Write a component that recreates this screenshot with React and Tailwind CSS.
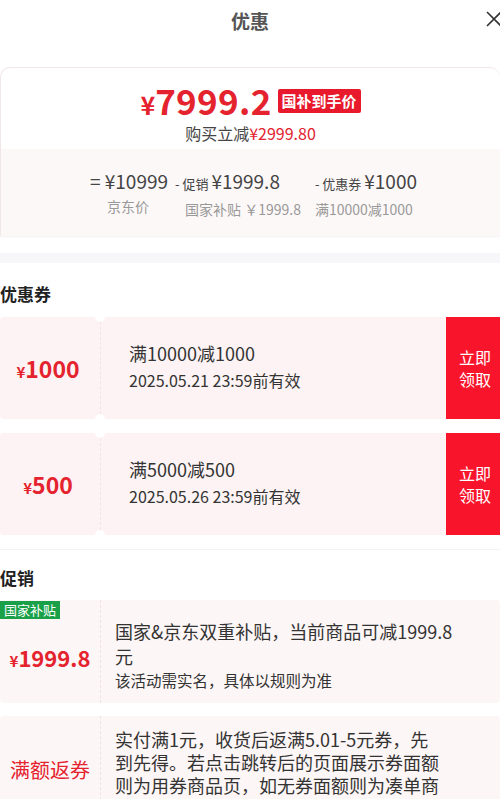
import React from 'react'

const coupons = [
  { amount: '1000', rule: '满10000减1000', expire: '2025.05.21 23:59前有效' },
  { amount: '500', rule: '满5000减500', expire: '2025.05.26 23:59前有效' },
]

function Notch({ children, className = '' }) {
  return (
    <div className={`relative w-[101px] shrink-0 flex items-center justify-center border-r border-dashed border-[#f3e3e5] ${className}`}>
      <span className="absolute -top-[5px] -right-[5px] w-[10px] h-[10px] rounded-full bg-white" />
      <span className="absolute -bottom-[5px] -right-[5px] w-[10px] h-[10px] rounded-full bg-white" />
      {children}
    </div>
  )
}

export default function App() {
  return (
    <div className="w-[500px] h-[799px] overflow-hidden bg-white text-[#333]" style={{ fontFamily: '"Noto Sans CJK SC", "Noto Sans", sans-serif' }}>
      {/* header */}
      <div className="relative h-[40px] flex items-center justify-center">
        <h1 className="text-[19px] font-bold text-[#555] leading-none">优惠</h1>
        <span className="absolute right-[-4px] top-[9px] text-[#333]">
          <svg width="20" height="20" viewBox="0 0 20 20" fill="none" stroke="currentColor" strokeWidth="1.6">
            <path d="M3 3 L17 17 M17 3 L3 17" />
          </svg>
        </span>
      </div>

      {/* price summary */}
      <div className="mt-[27px] rounded-t-[10px] border-t border-l border-[#f1e6e8] shadow-[0_1px_2px_rgba(0,0,0,0.06)]">
        <div className="pt-[12px] flex flex-col items-center">
          <div className="flex items-center gap-[6px] text-[#e4232f] h-[38px]">
            <span className="font-bold leading-none">
              <span className="text-[25px]">¥</span>
              <span className="text-[35px] tracking-[0.3px]">7999.2</span>
            </span>
            <span className="bg-[#e8192c] text-white text-[15px] font-bold px-[4px] rounded-[2px] leading-[24px] mt-[4px]">国补到手价</span>
          </div>
          <div className="text-[16px] leading-[22px] mt-[4px] text-[#444]">
            购买立减<span className="text-[#e4232f]">¥2999.80</span>
          </div>
        </div>
        <div className="mt-[5px] bg-[#fdf8f8] h-[87px] flex justify-center pt-[20px] text-[#444]">
          <div className="flex items-start pl-[6px]">
            <div className="flex flex-col items-start">
              <span className="text-[19px] leading-[24px]">= ¥10999</span>
              <span className="text-[14px] text-[#999] mt-[3px] pl-[17px]">京东价</span>
            </div>
            <div className="flex flex-col items-start ml-[7px]">
              <span className="text-[19px] leading-[24px]"><span className="text-[13px]">- 促销 </span>¥1999.8</span>
              <span className="text-[14px] text-[#999] mt-[3px] pl-[10px]">国家补贴 ￥1999.8</span>
            </div>
            <div className="flex flex-col items-start ml-[14px]">
              <span className="text-[19px] leading-[24px]"><span className="text-[13px]">- 优惠券 </span>¥1000</span>
              <span className="text-[14px] text-[#999] mt-[3px]">满10000减1000</span>
            </div>
          </div>
        </div>
      </div>

      <div className="mt-[17px] h-[10px] bg-[#f7f7fa]" />

      {/* coupons */}
      <h2 className="mt-[20px] text-[17px] font-bold leading-[22px] text-[#222]">优惠券</h2>
      <div className="mt-[12px] flex flex-col gap-[14px]">
        {coupons.map((c) => (
          <div key={c.amount} className="flex h-[102px] bg-[#fdf3f4] rounded-[4px]">
            <Notch>
              <span className="text-[#e4232f] font-bold leading-none -ml-[4px]">
                <span className="text-[15px]">¥</span>
                <span className="text-[23px]">{c.amount}</span>
              </span>
            </Notch>
            <div className="flex-1 flex flex-col justify-center pl-[28px] pb-[4px]">
              <span className="text-[18px] leading-[24px] text-[#333]">{c.rule}</span>
              <span className="text-[16px] leading-[22px] mt-[4px] text-[#333]">{c.expire}</span>
            </div>
            <div className="w-[54px] bg-[#f8152b] text-white text-[16px] leading-[22px] flex items-center justify-center pl-[6px]">
              <span className="w-[34px]">立即领取</span>
            </div>
          </div>
        ))}
      </div>

      <div className="mt-[14px] h-px bg-[#f3f3f3]" />

      {/* promotions */}
      <h2 className="mt-[17px] text-[17px] font-bold leading-[22px] text-[#222]">促销</h2>
      <div className="mt-[11px] flex flex-col gap-[13px]">
        <div className="flex h-[103px] bg-[#fdf6f6] rounded-[4px]">
          <div className="relative w-[101px] shrink-0 flex items-center justify-center border-r border-dashed border-[#f0e2e4]">
            <span className="absolute left-0 top-[1px] bg-[#19a049] text-white text-[13px] leading-[18px] px-[4px]">国家补贴</span>
            <span className="text-[#e4232f] font-bold leading-none mt-[10px]">
              <span className="text-[15px]">¥</span>
              <span className="text-[22px]">1999.8</span>
            </span>
          </div>
          <div className="pl-[14px] pt-[19px]">
            <p className="w-[345px] text-[18px] leading-[25px] text-[#333]">国家&amp;京东双重补贴，当前商品可减1999.8元</p>
            <p className="text-[15.5px] leading-[20px] mt-[1px] text-[#333]">该活动需实名，具体以规则为准</p>
          </div>
        </div>
        <div className="flex h-[120px] bg-[#fdf6f6] rounded-[4px]">
          <div className="w-[101px] shrink-0 flex items-center justify-center border-r border-dashed border-[#f0e2e4] pb-[12px]">
            <span className="text-[#e4232f] text-[20px] leading-none">满额返券</span>
          </div>
          <div className="pl-[14px] pt-[12px]">
            <p className="w-[330px] text-[18px] leading-[23px] text-[#333]">实付满1元，收货后返满5.01-5元券，先到先得。若点击跳转后的页面展示券面额则为用券商品页，如无券面额则为凑单商品页或活动页</p>
          </div>
        </div>
      </div>
    </div>
  )
}
